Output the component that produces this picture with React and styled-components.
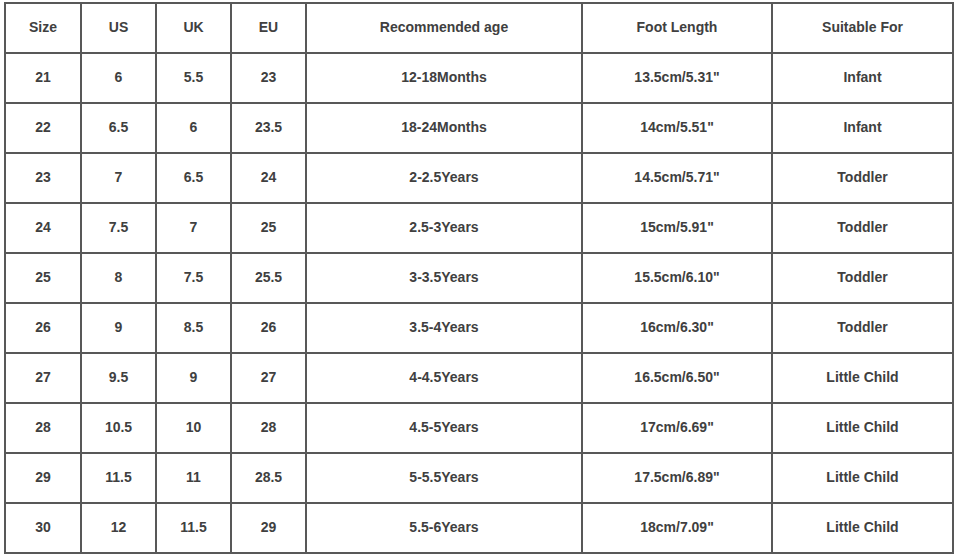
import React from 'react';
import styled, { createGlobalStyle } from 'styled-components';

const GlobalStyle = createGlobalStyle`
  body {
    margin: 0;
    background: #fff;
    font-family: "Liberation Sans", Arial, sans-serif;
  }
`;

const Page = styled.div`
  padding: 2px 4px 0 4px;
`;

const SizeTable = styled.table`
  width: 948px;
  border-collapse: collapse;
  table-layout: fixed;
  color: #404040;
  font-size: 14px;
  font-weight: bold;
`;

const HeadCell = styled.th`
  height: 45px;
  border: 2px solid #585858;
  text-align: center;
  font-weight: bold;
  padding: 0 0 3px 0;
`;

const Cell = styled.td`
  height: 45px;
  border: 2px solid #585858;
  text-align: center;
  padding: 0 0 3px 0;
`;

const columns = [
  { label: 'Size', width: 76 },
  { label: 'US', width: 75 },
  { label: 'UK', width: 75 },
  { label: 'EU', width: 75 },
  { label: 'Recommended age', width: 276 },
  { label: 'Foot Length', width: 190 },
  { label: 'Suitable For', width: 181 },
];

const rows = [
  ['21', '6', '5.5', '23', '12-18Months', '13.5cm/5.31"', 'Infant'],
  ['22', '6.5', '6', '23.5', '18-24Months', '14cm/5.51"', 'Infant'],
  ['23', '7', '6.5', '24', '2-2.5Years', '14.5cm/5.71"', 'Toddler'],
  ['24', '7.5', '7', '25', '2.5-3Years', '15cm/5.91"', 'Toddler'],
  ['25', '8', '7.5', '25.5', '3-3.5Years', '15.5cm/6.10"', 'Toddler'],
  ['26', '9', '8.5', '26', '3.5-4Years', '16cm/6.30"', 'Toddler'],
  ['27', '9.5', '9', '27', '4-4.5Years', '16.5cm/6.50"', 'Little Child'],
  ['28', '10.5', '10', '28', '4.5-5Years', '17cm/6.69"', 'Little Child'],
  ['29', '11.5', '11', '28.5', '5-5.5Years', '17.5cm/6.89"', 'Little Child'],
  ['30', '12', '11.5', '29', '5.5-6Years', '18cm/7.09"', 'Little Child'],
];

const App = () => (
  <Page>
    <GlobalStyle />
    <SizeTable>
      <colgroup>
        {columns.map(c => (
          <col key={c.label} style={{ width: c.width }} />
        ))}
      </colgroup>
      <thead>
        <tr>
          {columns.map(c => (
            <HeadCell key={c.label}>{c.label}</HeadCell>
          ))}
        </tr>
      </thead>
      <tbody>
        {rows.map(r => (
          <tr key={r[0]}>
            {r.map((v, i) => (
              <Cell key={i}>{v}</Cell>
            ))}
          </tr>
        ))}
      </tbody>
    </SizeTable>
  </Page>
);

export default App;
